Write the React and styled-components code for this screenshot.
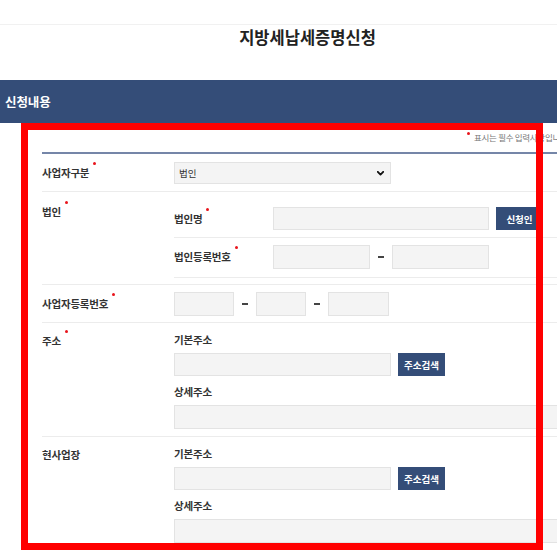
import React from "react";
import styled, { createGlobalStyle } from "styled-components";

const Global = createGlobalStyle`
  html, body { margin: 0; padding: 0; background: #fff; }
  body { font-family: "Noto Sans CJK KR", "Noto Sans", sans-serif; color: #333; overflow: hidden; }
  * { box-sizing: border-box; }
`;

const Page = styled.div`
  position: relative;
  width: 557px;
  height: 550px;
  overflow: hidden;
  background: #fff;
`;

const Header = styled.header`
  margin-top: 24px;
  border-top: 1px solid #f1f1f1;
  height: 56px;
  padding: 1px 0 0 58px;
`;

const Title = styled.h1`
  margin: 0;
  text-align: center;
  font-size: 16.5px;
  line-height: 22px;
  font-weight: 700;
  color: #222;
  letter-spacing: 0;
`;

const Banner = styled.div`
  height: 43px;
  background: #344d78;
  display: flex;
  align-items: center;
  padding-left: 5px;
  color: #fff;
  font-size: 12.5px;
  font-weight: 700;
  letter-spacing: -0.1px;
`;

const Content = styled.div`
  padding-left: 42px;
  width: 680px;
`;

const NoteRow = styled.div`
  height: 29px;
  padding: 9px 0 0 425px;
  display: flex;
  align-items: flex-start;
  font-size: 8.5px;
  line-height: 10px;
  color: #777;
  white-space: nowrap;
  letter-spacing: -0.3px;
`;

const Dot = styled.span`
  display: inline-block;
  flex: none;
  width: 3px;
  height: 3px;
  border-radius: 50%;
  background: #e8141b;
  margin: ${(p) => (p.$before ? "0 4px 0 0" : "0 0 0 4px")};
  transform: translateY(${(p) => (p.$before ? "0" : "-3px")});
  align-self: flex-start;
`;

const Table = styled.div`
  border-top: 2px solid #7586a8;
  width: 620px;
`;

const Row = styled.div`
  display: grid;
  grid-template-columns: 132px 1fr;
  align-items: ${(p) => (p.$top ? "start" : "center")};
  border-bottom: 1px solid #ececec;
`;

const Label = styled.div`
  display: inline-flex;
  align-items: flex-start;
  font-size: 10.5px;
  line-height: 16px;
  font-weight: 700;
  color: #333;
  letter-spacing: -0.2px;
  padding-top: ${(p) => p.$pt || 0}px;
`;

const Field = styled.div`
  padding: ${(p) => p.$pad || "7px 0 6px"};
  display: flex;
  flex-direction: column;
`;

const Line = styled.div`
  display: flex;
  align-items: center;
`;

const SubRow = styled.div`
  display: grid;
  grid-template-columns: 99px 1fr;
  align-items: center;
  padding: ${(p) => p.$pad};
  border-bottom: 1px solid #ececec;
`;

const SubLabel = styled(Label)`
  margin: ${(p) => p.$m || "0"};
`;

const Input = styled.div`
  flex: none;
  width: ${(p) => p.$w}px;
  height: ${(p) => p.$h || 23}px;
  background: #f4f4f4;
  border: 1px solid #e3e3e3;
`;

const SelectBox = styled.div`
  width: 217px;
  height: 22px;
  background: #f4f4f4;
  border: 1px solid #e3e3e3;
  display: flex;
  align-items: center;
  justify-content: space-between;
  padding: 0 6px 0 4px;
  font-size: 9.5px;
  color: #333;
  letter-spacing: 0;
`;

const Dash = styled.span`
  flex: none;
  width: 22px;
  display: flex;
  justify-content: center;
  &::before {
    content: "";
    width: 6px;
    height: 2px;
    background: #444;
  }
`;

const Button = styled.button`
  flex: none;
  margin-left: 7px;
  min-width: 47px;
  height: 23px;
  padding: 0 5px;
  border: none;
  background: #344d78;
  color: #fff;
  font-family: inherit;
  font-size: 9.5px;
  font-weight: 700;
  letter-spacing: 0;
  cursor: pointer;
`;

const RedBox = styled.div`
  position: absolute;
  left: 21px;
  top: 123px;
  width: 522px;
  height: 427px;
  border: 7px solid #ff0000;
  pointer-events: none;
`;

const Chevron = () => (
  <svg width="7" height="5" viewBox="0 0 7 5" aria-hidden="true">
    <path d="M0.8 0.8 L3.5 3.6 L6.2 0.8" fill="none" stroke="#111" strokeWidth="1.8" strokeLinecap="round" strokeLinejoin="round" />
  </svg>
);

const Address = ({ wide }) => (
  <Field $pad="9px 0 7px">
    <SubLabel>기본주소</SubLabel>
    <Line style={{ marginTop: 5 }}>
      <Input $w={217} />
      <Button>주소검색</Button>
    </Line>
    <SubLabel $m="8px 0 0">상세주소</SubLabel>
    <Line style={{ marginTop: 5 }}>
      <Input $w={wide} $h={24} />
    </Line>
  </Field>
);

export default function App() {
  return (
    <>
      <Global />
      <Page>
        <Header>
          <Title>지방세납세증명신청</Title>
        </Header>
        <Banner>신청내용</Banner>
        <Content>
          <NoteRow>
            <Dot $before />
            표시는 필수 입력사항입니다.
          </NoteRow>
          <Table>
            <Row>
              <Label>
                사업자구분<Dot />
              </Label>
              <Field $pad="8px 0 7px">
                <SelectBox>
                  <span>법인</span>
                  <Chevron />
                </SelectBox>
              </Field>
            </Row>
            <Row $top>
              <Label $pt={12}>
                법인<Dot />
              </Label>
              <Field $pad="7px 0 6px">
                <SubRow $pad="8px 0 7px">
                  <SubLabel>
                    법인명<Dot />
                  </SubLabel>
                  <Line>
                    <Input $w={216} />
                    <Button>신청인</Button>
                  </Line>
                </SubRow>
                <SubRow $pad="7px 0 8px">
                  <SubLabel>
                    법인등록번호<Dot />
                  </SubLabel>
                  <Line>
                    <Input $w={97} $h={24} />
                    <Dash />
                    <Input $w={97} $h={24} />
                  </Line>
                </SubRow>
              </Field>
            </Row>
            <Row>
              <Label>
                사업자등록번호<Dot />
              </Label>
              <Field $pad="7px 0 6px">
                <Line>
                  <Input $w={60} $h={24} />
                  <Dash />
                  <Input $w={50} $h={24} />
                  <Dash />
                  <Input $w={61} $h={24} />
                </Line>
              </Field>
            </Row>
            <Row $top>
              <Label $pt={10}>
                주소<Dot />
              </Label>
              <Address wide={440} />
            </Row>
            <Row $top>
              <Label $pt={10}>현사업장</Label>
              <Address wide={440} />
            </Row>
          </Table>
        </Content>
        <RedBox />
      </Page>
    </>
  );
}
